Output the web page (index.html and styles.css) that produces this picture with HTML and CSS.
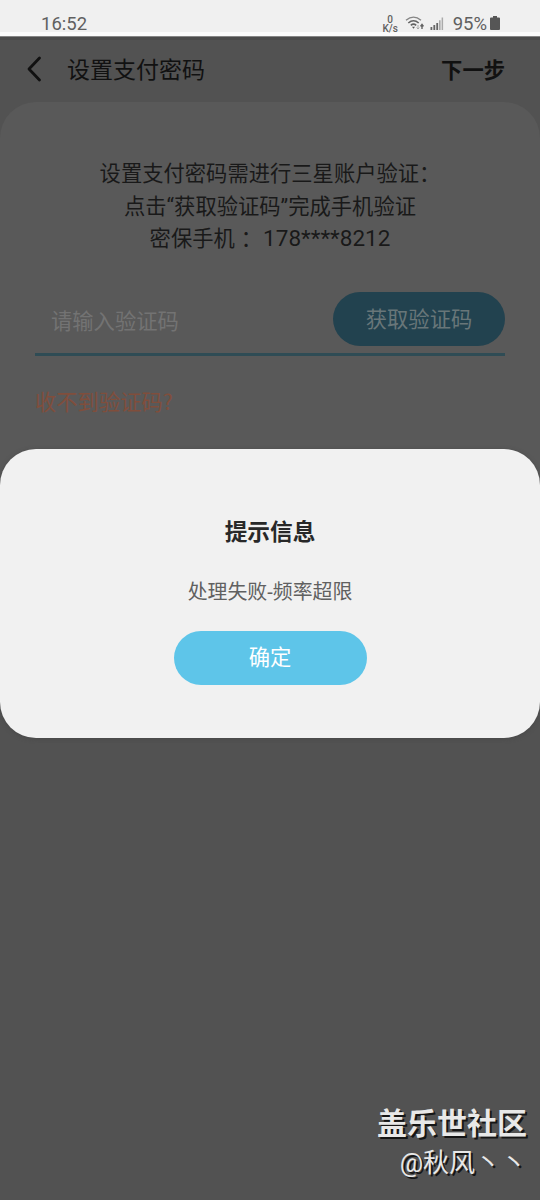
FILE: index.html
```html
<!DOCTYPE html>
<html lang="zh-CN">
<head>
<meta charset="utf-8">
<title>设置支付密码</title>
<link rel="stylesheet" href="styles.css">
</head>
<body>
<div class="screen">
  <header class="status">
    <span class="clock">16:52</span>
    <div class="indicators">
      <span class="speed"><span>0</span><span>K/s</span></span>
      <svg class="wifi" width="20" height="15" viewBox="0 0 20 15" fill="none" stroke="#636363">
        <path d="M1 4.2Q8.5-2 16 4.2" stroke-width="1.4" stroke="#858585"/>
        <path d="M3.3 7Q8.5 2.5 13.7 7" stroke-width="1.6"/>
        <path d="M5.8 9.3Q8.5 7 11.2 9.3" stroke-width="1.6"/>
        <path d="M7 10.8h3l-1.5 2z" fill="#555" stroke="none"/>
        <path d="M13 9v4m-1.4-1.4L13 13l1.4-1.4" stroke="#aaa"/>
        <path d="M17 13V9m-1.5 1.4L17 8.5l1.5 1.9" stroke-width="1.4"/>
      </svg>
      <svg class="signal" width="14" height="14" viewBox="0 0 14 14">
        <path d="M.5 10h1.8v3H.5zM3.4 8h1.8v5H3.4zM6.3 6h1.8v7H6.3z" fill="#666"/>
        <path d="M9 3.2h1.6V13H9zM11.6.5h1.5V13h-1.5z" fill="#aaa"/>
      </svg>
      <span class="percent">95%</span>
      <svg class="battery" width="10" height="15" viewBox="0 0 10 15"><path d="M3 0h4v1.5h2q1 0 1 1V13q0 1-1 1H1q-1 0-1-1V2.5q0-1 1-1h2z" fill="#565656"/></svg>
    </div>
  </header>
  <nav class="bar">
    <svg class="back" width="18" height="28" viewBox="0 0 18 28"><path d="M14.5 3 4 14l10.5 11" fill="none" stroke="#111" stroke-width="2.8" stroke-linecap="round" stroke-linejoin="round"/></svg>
    <h1 class="title">设置支付密码</h1>
    <span class="next">下一步</span>
  </nav>
  <main class="card">
    <div class="intro">
      <p>设置支付密码需进行三星账户验证：</p>
      <p>点击“获取验证码”完成手机验证</p>
      <p>密保手机<span class="colon">：</span><span class="number">178****8212</span></p>
    </div>
    <div class="field">
      <span class="placeholder">请输入验证码</span>
      <span class="get-code">获取验证码</span>
    </div>
    <p class="help">收不到验证码?</p>
  </main>
  <section class="dialog">
    <h2 class="dialog-title">提示信息</h2>
    <p class="dialog-text">处理失败-频率超限</p>
    <span class="confirm">确定</span>
  </section>
  <footer class="watermark">
    <div class="community">盖乐世社区</div>
    <div class="author">@秋风丶丶</div>
  </footer>
</div>
</body>
</html>
```
FILE: styles.css
```css
* { box-sizing: border-box; }
body { margin: 0; }
h1, h2, p { margin: 0; font-weight: 400; }
svg { display: block; flex: none; }

.screen {
  position: relative;
  width: 540px;
  height: 1200px;
  overflow: hidden;
  background: #525252;
  color: #191919;
  font-family: Roboto, "Noto Sans CJK SC", sans-serif;
  white-space: nowrap;
}

.status {
  display: flex;
  justify-content: space-between;
  height: 37px;
  padding: 12px 40px 0 41px;
  background: linear-gradient(#f0f0f0 32px, #fbfbfb 32px, #fbfbfb 36px, #858585 36px);
  color: #606060;
  font-size: 18.5px;
  line-height: 24px;
}
.indicators { display: flex; }
.speed {
  display: flex;
  flex-direction: column;
  width: 17px;
  padding-top: 3px;
  font-size: 10px;
  font-weight: 500;
  line-height: 9px;
  text-align: center;
}
.wifi { margin: 4px 0 0 6px; }
.signal { margin: 5px 0 0 5px; }
.percent { margin-left: 9px; }
.battery { margin: 4px 0 0 3px; }

.bar {
  display: flex;
  align-items: center;
  height: 65px;
  padding: 0 35px 6px 25px;
  border-top: 3px solid #4b4b4b;
  color: #111;
}
.back { margin-top: 2px; }
.title { margin-left: 24px; font-size: 23px; }
.next { margin-left: auto; font-size: 21.3px; font-weight: 700; }

.card {
  height: 500px;
  padding: 56px 35px 0;
  border-radius: 36px;
  background: #595959;
}
.intro {
  font-size: 21.3px;
  line-height: 32.6px;
  text-align: center;
}
.colon { margin: 0 1px 0 6px; }
.number { font-size: 22.5px; line-height: 1; }
.field {
  display: flex;
  justify-content: space-between;
  height: 64px;
  margin-top: 36px;
  padding-left: 16px;
  border-bottom: 3px solid #2f4c55;
}
.placeholder { color: #737373; font-size: 21.3px; line-height: 59px; }
.get-code {
  width: 172px;
  height: 54px;
  border-radius: 27px;
  background: #22424f;
  color: #687679;
  font-size: 21.3px;
  line-height: 55px;
  text-align: center;
}
.help {
  margin-top: 29px;
  color: #804e3c;
  font-family: "Noto Sans CJK SC", sans-serif;
  font-size: 21.3px;
  line-height: 32px;
}

.dialog {
  position: absolute;
  top: 449px;
  left: 0;
  display: flex;
  flex-direction: column;
  align-items: center;
  width: 540px;
  height: 289px;
  padding-top: 67px;
  border-radius: 36px;
  background: #f1f1f1;
  box-shadow: 0 1px 4px #484848;
}
.dialog-title { color: #282828; font-size: 22.7px; font-weight: 700; line-height: 34px; }
.dialog-text { margin-top: 28px; color: #606060; font-size: 19.9px; line-height: 30px; }
.confirm {
  width: 193px;
  height: 54px;
  margin-top: 23px;
  border-radius: 27px;
  background: #5ec5e9;
  color: #fff;
  font-size: 21.3px;
  line-height: 54px;
  text-align: center;
}

.watermark {
  position: absolute;
  right: 13px;
  bottom: 18px;
  color: #e8e8e8;
  text-align: right;
  text-shadow: 2px 2px 0 #151515;
}
.community { font-size: 30px; font-weight: 700; line-height: 40px; }
.author { font-size: 26px; line-height: 38px; }
```
